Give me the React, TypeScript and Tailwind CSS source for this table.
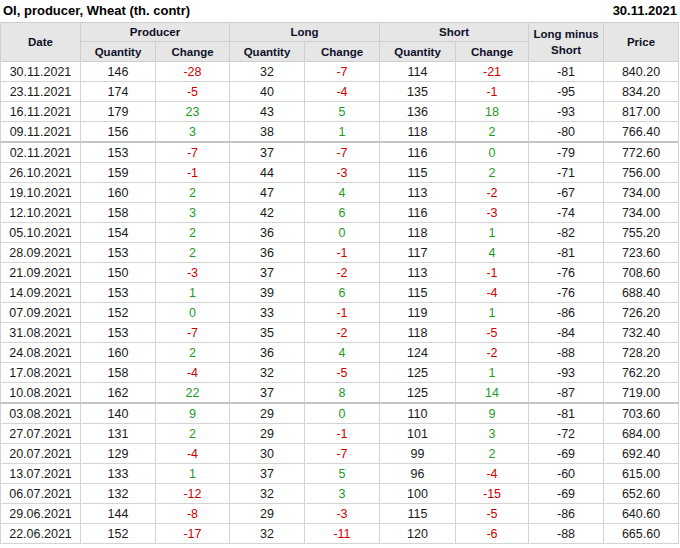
const rows: [string, number, number, number, number, number, number, number, string][] = [
  ["30.11.2021", 146, -28, 32, -7, 114, -21, -81, "840.20"],
  ["23.11.2021", 174, -5, 40, -4, 135, -1, -95, "834.20"],
  ["16.11.2021", 179, 23, 43, 5, 136, 18, -93, "817.00"],
  ["09.11.2021", 156, 3, 38, 1, 118, 2, -80, "766.40"],
  ["02.11.2021", 153, -7, 37, -7, 116, 0, -79, "772.60"],
  ["26.10.2021", 159, -1, 44, -3, 115, 2, -71, "756.00"],
  ["19.10.2021", 160, 2, 47, 4, 113, -2, -67, "734.00"],
  ["12.10.2021", 158, 3, 42, 6, 116, -3, -74, "734.00"],
  ["05.10.2021", 154, 2, 36, 0, 118, 1, -82, "755.20"],
  ["28.09.2021", 153, 2, 36, -1, 117, 4, -81, "723.60"],
  ["21.09.2021", 150, -3, 37, -2, 113, -1, -76, "708.60"],
  ["14.09.2021", 153, 1, 39, 6, 115, -4, -76, "688.40"],
  ["07.09.2021", 152, 0, 33, -1, 119, 1, -86, "726.20"],
  ["31.08.2021", 153, -7, 35, -2, 118, -5, -84, "732.40"],
  ["24.08.2021", 160, 2, 36, 4, 124, -2, -88, "728.20"],
  ["17.08.2021", 158, -4, 32, -5, 125, 1, -93, "762.20"],
  ["10.08.2021", 162, 22, 37, 8, 125, 14, -87, "719.00"],
  ["03.08.2021", 140, 9, 29, 0, 110, 9, -81, "703.60"],
  ["27.07.2021", 131, 2, 29, -1, 101, 3, -72, "684.00"],
  ["20.07.2021", 129, -4, 30, -7, 99, 2, -69, "692.40"],
  ["13.07.2021", 133, 1, 37, 5, 96, -4, -60, "615.00"],
  ["06.07.2021", 132, -12, 32, 3, 100, -15, -69, "652.60"],
  ["29.06.2021", 144, -8, 29, -3, 115, -5, -86, "640.60"],
  ["22.06.2021", 152, -17, 32, -11, 120, -6, -88, "665.60"],
];

const splitRows = ["02.11.2021", "03.08.2021"];

function Change({ v }: { v: number }) {
  const color = v < 0 ? "text-[#d10000]" : "text-[#1e9a1e]";
  return <td className={`border border-[#d4d4d4] pt-px ${color}`}>{v}</td>;
}

export default function App() {
  const th = "border border-[#cfcfcf] text-[11.5px] font-bold text-[#10102a]";
  const td = "border border-[#d4d4d4] pt-px";

  return (
    <div className="w-[680px] bg-white font-['Liberation_Sans',Arial,sans-serif] text-[#1a1a1a]">
      <div className="flex h-[22px] items-center justify-between pl-[3px] pr-[3px] text-[13px] font-bold text-black">
        <span>OI, producer, Wheat (th. contr)</span>
        <span>30.11.2021</span>
      </div>
      <table className="w-[679px] table-fixed border-collapse text-center text-[12.5px] leading-[18px]">
        <colgroup>
          <col className="w-[80px]" />
          <col className="w-[75px]" />
          <col className="w-[74px]" />
          <col className="w-[75px]" />
          <col className="w-[75px]" />
          <col className="w-[76px]" />
          <col className="w-[73px]" />
          <col className="w-[75px]" />
          <col className="w-[75px]" />
        </colgroup>
        <thead className="bg-[#e6e6e6]">
          <tr className="h-[19px]">
            <th rowSpan={2} className={th}>Date</th>
            <th colSpan={2} className={th}>Producer</th>
            <th colSpan={2} className={th}>Long</th>
            <th colSpan={2} className={th}>Short</th>
            <th rowSpan={2} className={`${th} leading-[16px]`}>
              Long minus
              <br />
              Short
            </th>
            <th rowSpan={2} className={th}>Price</th>
          </tr>
          <tr className="h-[20px]">
            <th className={th}>Quantity</th>
            <th className={th}>Change</th>
            <th className={th}>Quantity</th>
            <th className={th}>Change</th>
            <th className={th}>Quantity</th>
            <th className={th}>Change</th>
          </tr>
        </thead>
        <tbody>
          {rows.map((r) => (
            <tr
              key={r[0]}
              className={`h-[20px] ${splitRows.includes(r[0]) ? "border-t-2 border-t-[#c4c4c4]" : ""}`}
            >
              <td className={td}>{r[0]}</td>
              <td className={td}>{r[1]}</td>
              <Change v={r[2]} />
              <td className={td}>{r[3]}</td>
              <Change v={r[4]} />
              <td className={td}>{r[5]}</td>
              <Change v={r[6]} />
              <td className={td}>{r[7]}</td>
              <td className={td}>{r[8]}</td>
            </tr>
          ))}
        </tbody>
      </table>
    </div>
  );
}
